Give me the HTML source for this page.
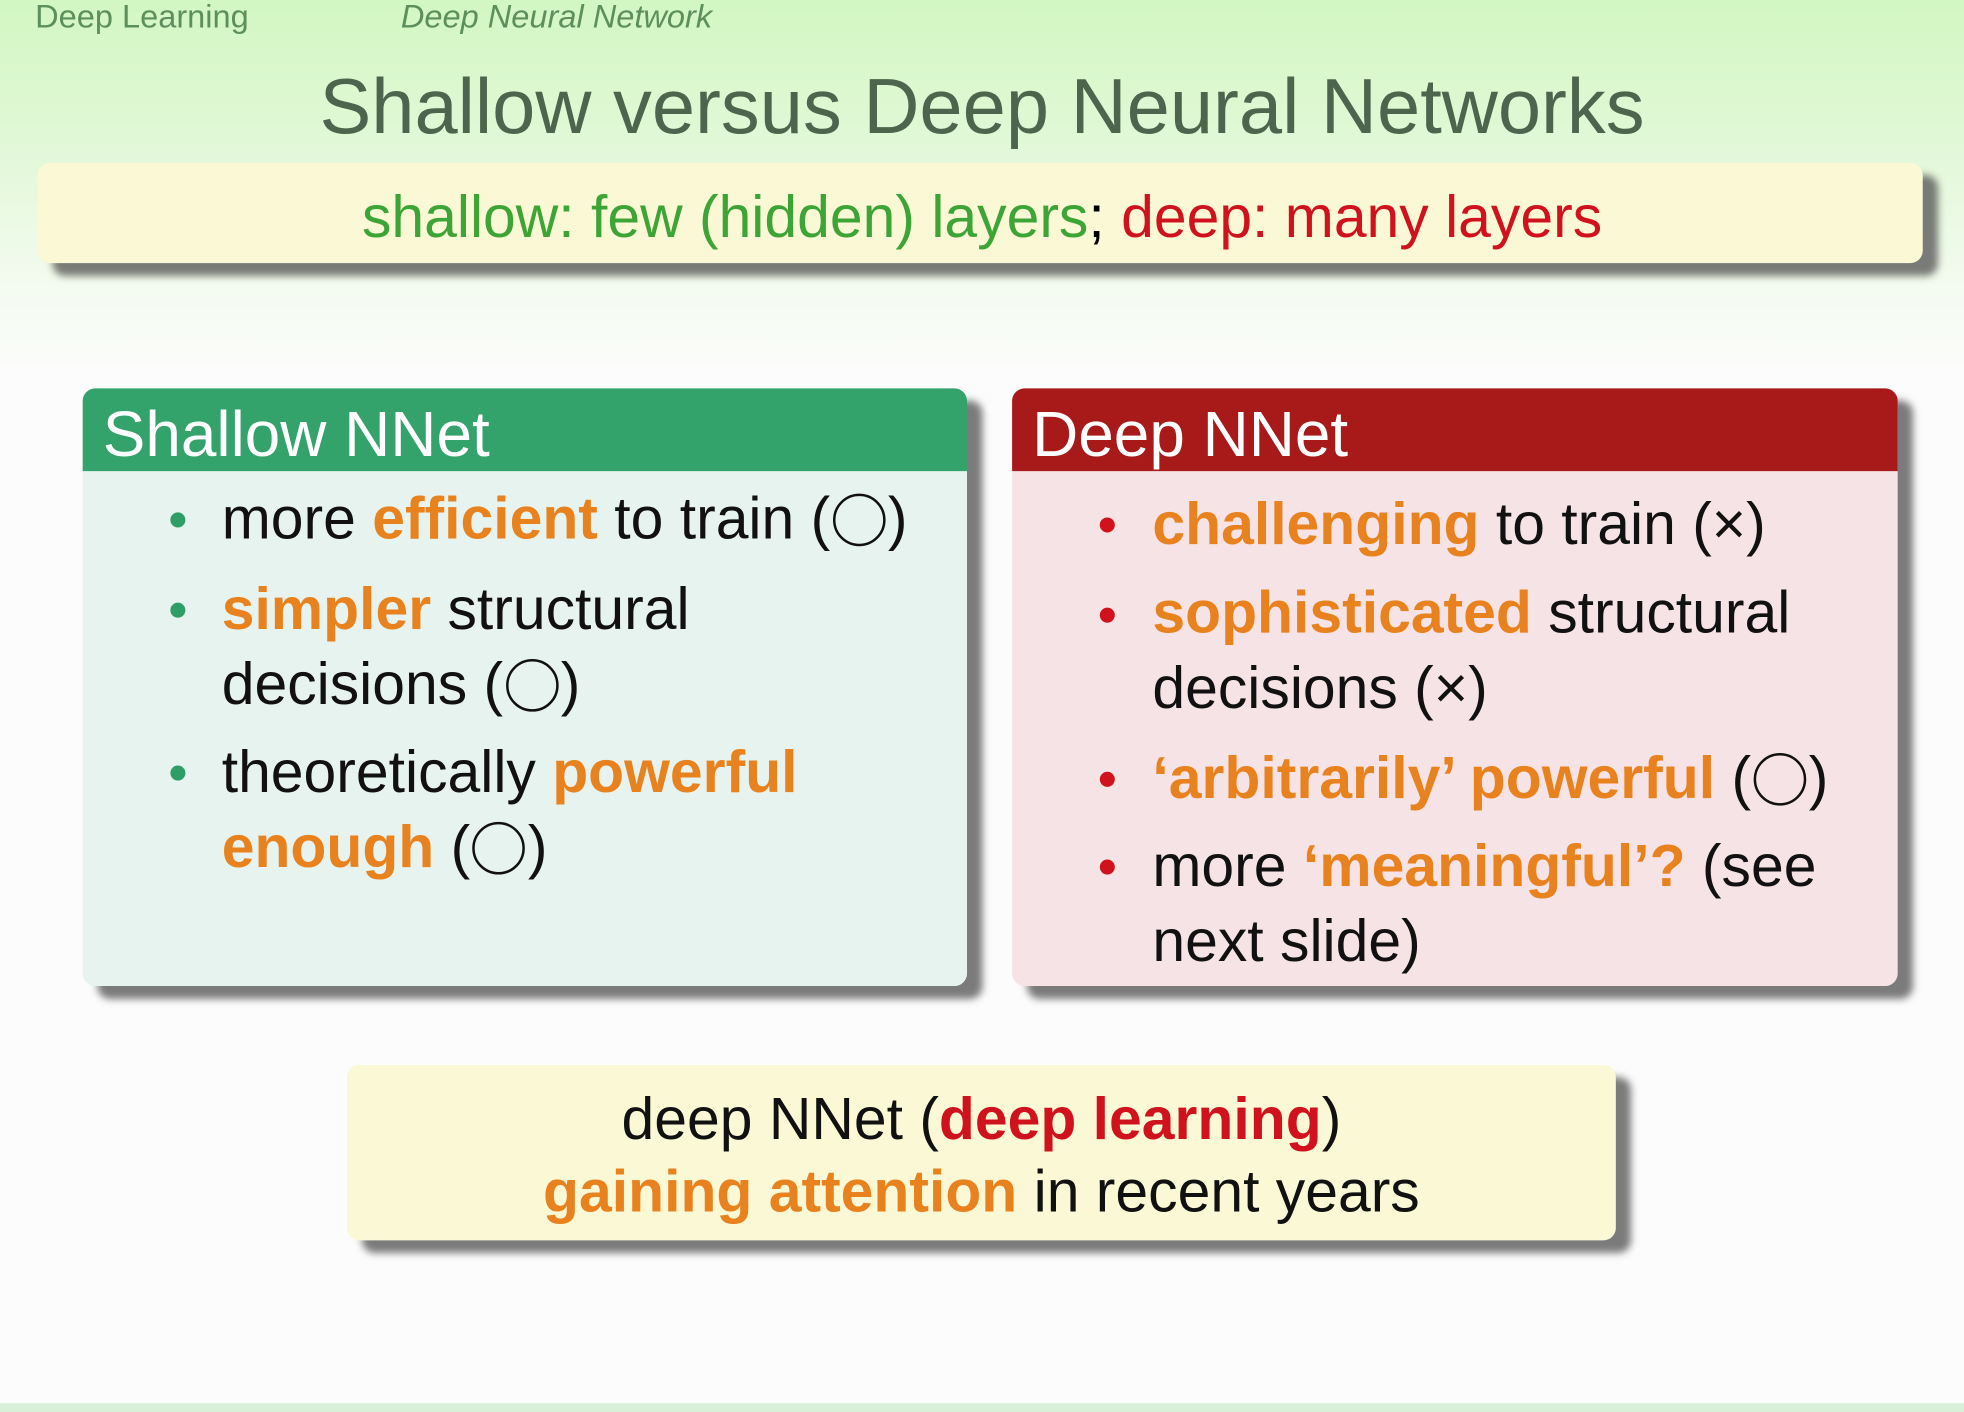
<!DOCTYPE html>
<html><head><meta charset="utf-8">
<style>
html,body{margin:0;padding:0;width:1964px;height:1412px;overflow:hidden;background:#fdfdfd;}
#s{position:absolute;left:0;top:0;width:1568px;height:1127px;transform:scale(1.2526,1.2529);transform-origin:0 0;
 font-family:"Liberation Sans",Arial,sans-serif;
 background:linear-gradient(180deg,#d2f7c2 0px,#e2f8d8 120px,#f4fbf0 230px,#fcfcfc 300px,#fcfcfc 100%);}
.a{position:absolute;white-space:nowrap;line-height:1;}
.o{color:#e8821e;font-weight:bold;}
.r{color:#d0121c;}
.rb{color:#d0121c;font-weight:bold;}
.box{position:absolute;border-radius:10px;box-shadow:12px 10px 6px rgba(80,80,80,0.75);}
.hd{position:absolute;left:0;right:0;top:0;height:66px;border-radius:10px 10px 0 0;color:#fff;font-size:51px;}
.dot{position:absolute;width:12px;height:12px;border-radius:50%;}
.c{display:inline-block;width:38px;height:38px;border:2px solid #111;border-radius:50%;vertical-align:-6px;margin:0 2px;}
.t{font-size:47px;color:#111;}
</style></head><body>
<div id="s">
 <div class="a" style="left:28px;top:0px;font-size:26px;color:#5d8f5d;">Deep Learning</div>
 <div class="a" style="left:320px;top:0px;font-size:26px;color:#5d8f5d;font-style:italic;">Deep Neural Network</div>
 <div class="a" style="left:0;width:1568px;text-align:center;top:55px;font-size:62px;color:#4d654d;">Shallow versus Deep Neural Networks</div>

 <div class="box" style="left:30px;top:130px;width:1505px;height:80px;background:#fbf8d6;"></div>
 <div class="a" style="left:0;width:1568px;text-align:center;top:149px;font-size:47px;"><span style="color:#3ca536">shallow: few (hidden) layers</span>;<span class="r"> deep: many layers</span></div>

 <div class="box" style="left:66px;top:310px;width:706px;height:477px;background:#e7f3ee;">
  <div class="hd" style="background:#34a26b;"><span style="position:absolute;left:16px;top:7px;">Shallow NNet</span></div>
 </div>
 <div class="dot" style="left:136px;top:409px;background:#2f9e66;"></div>
 <div class="a t" style="left:177px;top:390px;">more <span class="o">efficient</span> to train (<span class="c"></span>)</div>
 <div class="dot" style="left:136px;top:481px;background:#2f9e66;"></div>
 <div class="a t" style="left:177px;top:462px;"><span class="o">simpler</span> structural</div>
 <div class="a t" style="left:177px;top:522px;">decisions (<span class="c"></span>)</div>
 <div class="dot" style="left:136px;top:611px;background:#2f9e66;"></div>
 <div class="a t" style="left:177px;top:592px;">theoretically <span class="o">powerful</span></div>
 <div class="a t" style="left:177px;top:652px;"><span class="o">enough</span> (<span class="c"></span>)</div>

 <div class="box" style="left:808px;top:310px;width:707px;height:477px;background:#f6e3e5;">
  <div class="hd" style="background:#a81a1a;"><span style="position:absolute;left:16px;top:7px;">Deep NNet</span></div>
 </div>
 <div class="dot" style="left:878px;top:413px;background:#d0121c;"></div>
 <div class="a t" style="left:920px;top:394px;"><span class="o">challenging</span> to train (×)</div>
 <div class="dot" style="left:878px;top:485px;background:#d0121c;"></div>
 <div class="a t" style="left:920px;top:465px;"><span class="o">sophisticated</span> structural</div>
 <div class="a t" style="left:920px;top:525px;">decisions (×)</div>
 <div class="dot" style="left:878px;top:616px;background:#d0121c;"></div>
 <div class="a t" style="left:920px;top:597px;"><span class="o">‘arbitrarily’ powerful</span> (<span class="c"></span>)</div>
 <div class="dot" style="left:878px;top:686px;background:#d0121c;"></div>
 <div class="a t" style="left:920px;top:667px;">more <span class="o">‘meaningful’?</span> (see</div>
 <div class="a t" style="left:920px;top:727px;">next slide)</div>

 <div class="box" style="left:277px;top:850px;width:1013px;height:140px;background:#fbf8d6;"></div>
 <div class="a t" style="left:277px;width:1013px;text-align:center;top:869px;">deep NNet (<span class="rb">deep learning</span>)</div>
 <div class="a t" style="left:277px;width:1013px;text-align:center;top:927px;"><span class="o">gaining attention</span> in recent years</div>

 <div style="position:absolute;left:0;top:1120px;width:1568px;height:7px;background:#d8efd8;"></div>
</div>
</body></html>
